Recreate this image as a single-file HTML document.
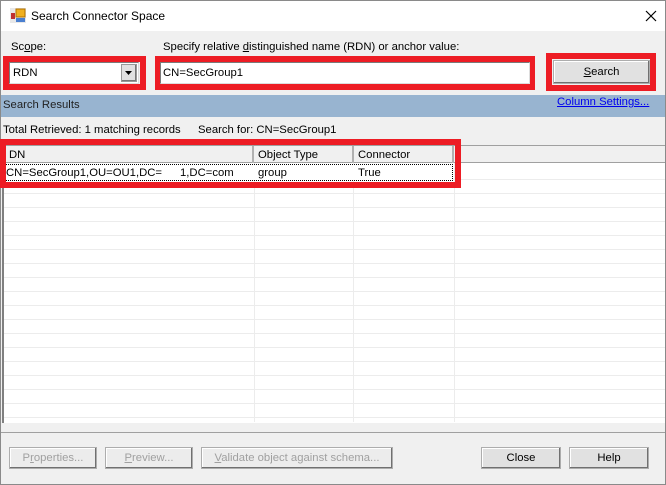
<!DOCTYPE html>
<html><head><meta charset="utf-8"><style>
*{margin:0;padding:0;box-sizing:border-box}
body{width:666px;height:485px;overflow:hidden;font-family:"Liberation Sans",sans-serif;font-size:11.3px;color:#000;background:#f0f0f0;position:relative}
.a{position:absolute}
.red{position:absolute;border:6px solid #ed1c24}
.btn{position:absolute;background:#e1e1e1;border:1px solid #adadad;box-shadow:inset -1px -1px 0 #707070,inset 1px 1px 0 #fff;text-align:center;line-height:21px}
.dis{color:#a0a0a0;background:#ececec}
</style></head><body>
<div class="a" style="left:0;top:0;width:666px;height:485px;border:1px solid #8a8a8a"></div>
<div class="a" style="left:1px;top:1px;width:664px;height:30px;background:#fff"></div>
<svg class="a" style="left:10px;top:8px" width="16" height="15"><rect x="0" y="0" width="16" height="15" fill="#e8e8e8"/><rect x="6" y="1" width="9" height="8" fill="#f0b020" stroke="#b07000"/><rect x="1" y="5" width="4" height="6" fill="#c03030"/><rect x="6" y="10" width="9" height="4" fill="#4a7fd0"/></svg>
<div class="a" style="left:31px;top:9px;font-size:12px">Search Connector Space</div>
<svg class="a" style="left:645px;top:10px" width="12" height="12"><path d="M1 1L11 11M11 1L1 11" stroke="#000" stroke-width="1.2"/></svg>

<div class="a" style="left:11px;top:41px">Sc<u>o</u>pe:</div>
<div class="a" style="left:163px;top:41px">Specify relative <u>d</u>istinguished name (RDN) or anchor value:</div>

<div class="red" style="left:3px;top:56px;width:143px;height:34px"></div>
<div class="a" style="left:9px;top:62px;width:130px;height:22px;background:#fff;border:1px solid #7a7a7a;border-right-color:#ddd;border-bottom-color:#ddd"></div>
<div class="a" style="left:13px;top:67px">RDN</div>
<div class="a" style="left:121px;top:64px;width:16px;height:18px;background:#e1e1e1;border:1px solid #999;box-shadow:inset -1px -1px 0 #777"></div>
<svg class="a" style="left:125px;top:71px" width="8" height="5"><path d="M0 0H7L3.5 4Z" fill="#000"/></svg>

<div class="red" style="left:155px;top:56px;width:380px;height:34px"></div>
<div class="a" style="left:160px;top:62px;width:370px;height:22px;background:#fff;border:1px solid #7a7a7a;border-right-color:#ddd;border-bottom-color:#ddd"></div>
<div class="a" style="left:163px;top:67px">CN=SecGroup1</div>

<div class="red" style="left:546px;top:53px;width:110px;height:38px"></div>
<div class="btn" style="left:553px;top:60px;width:97px;height:24px;line-height:23px"><u>S</u>earch</div>

<div class="a" style="left:1px;top:95px;width:664px;height:22px;background:#98b4d0"></div>
<div class="a" style="left:3px;top:99px;color:#222">Search Results</div>
<div class="a" style="left:557px;top:96px;color:#0000ee;text-decoration:underline">Column Settings...</div>

<div class="a" style="left:3px;top:124px">Total Retrieved: 1 matching records</div>
<div class="a" style="left:198px;top:124px">Search for: CN=SecGroup1</div>

<div class="a" style="left:2px;top:145px;width:663px;height:278px;background:#fff;border-top:1px solid #a0a0a0;border-left:2px solid #808080"></div>
<div class="a" style="left:4px;top:146px;width:661px;height:17px;background:#f0f0f0;border-bottom:1px solid #a0a0a0"></div>
<div class="a" style="left:252px;top:146px;width:2px;height:17px;background:#b0b0b0"></div>
<div class="a" style="left:352px;top:146px;width:2px;height:17px;background:#b0b0b0"></div>
<div class="a" style="left:452px;top:146px;width:2px;height:17px;background:#b0b0b0"></div>
<div class="a" style="left:9px;top:149px">DN</div>
<div class="a" style="left:258px;top:149px">Object Type</div>
<div class="a" style="left:358px;top:149px">Connector</div>
<div class="a" style="left:254px;top:163px;width:1px;height:259px;background:#ececec"></div>
<div class="a" style="left:353px;top:163px;width:1px;height:259px;background:#ececec"></div>
<div class="a" style="left:454px;top:163px;width:1px;height:259px;background:#ececec"></div>
<div class="a" style="left:4px;top:163px;width:661px;height:259px;background:repeating-linear-gradient(to bottom,transparent 0,transparent 13px,#ececec 13px,#ececec 14px);background-position:0 3px"></div>
<div class="a" style="left:5px;top:164px;width:448px;height:17px;background:#fff;border:1px dotted #000"></div>
<div class="a" style="left:6px;top:167px">CN=SecGroup1,OU=OU1,DC=</div>
<div class="a" style="left:180px;top:167px">1,DC=com</div>
<div class="a" style="left:258px;top:167px">group</div>
<div class="a" style="left:358px;top:167px">True</div>
<div class="red" style="left:0;top:139px;width:461px;height:49px"></div>

<div class="a" style="left:1px;top:432px;width:664px;height:1px;background:#a0a0a0"></div>
<div class="btn dis" style="left:9px;top:447px;width:88px;height:22px">P<u>r</u>operties...</div>
<div class="btn dis" style="left:105px;top:447px;width:88px;height:22px"><u>P</u>review...</div>
<div class="btn dis" style="left:201px;top:447px;width:192px;height:22px"><u>V</u>alidate object against schema...</div>
<div class="btn" style="left:481px;top:447px;width:80px;height:22px">Close</div>
<div class="btn" style="left:569px;top:447px;width:80px;height:22px">Help</div>
</body></html>
